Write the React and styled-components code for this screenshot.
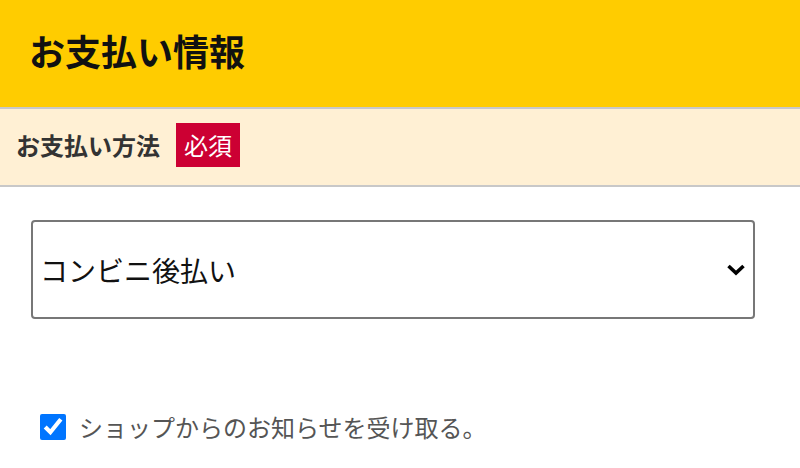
import React from 'react';
import styled, { createGlobalStyle } from 'styled-components';

const GlobalStyle = createGlobalStyle`
    html, body{
        margin: 0;
        padding: 0;
        background: #FFFFFF;
        font-family: "Noto Sans CJK JP", "Noto Sans", sans-serif;
    }
`

const Page = styled.div`
    width: 800px;
`

const Header = styled.header`
    height: 109px;
    background: #FFCC00;
    border-bottom: 2px solid #C8C8C8;
    display: flex;
    align-items: center;
    padding: 0 29px 6px;
    box-sizing: border-box;

    h1{
        margin: 0;
        font-size: 36px;
        line-height: 1.2;
        font-weight: 700;
        color: #111111;
    }
`

const LabelBar = styled.div`
    height: 78px;
    background: #FFF0D4;
    border-bottom: 2px solid #C8C8C8;
    display: flex;
    align-items: center;
    gap: 16px;
    padding: 0 16px;
    box-sizing: border-box;

    h2{
        margin: 0;
        font-size: 24px;
        line-height: 1.2;
        font-weight: 700;
        color: #333333;
        margin-top: -4px;
    }
`

const Badge = styled.span`
    display: flex;
    align-items: center;
    justify-content: center;
    width: 64px;
    height: 44px;
    background: #CC0033;
    color: #FFFFFF;
    font-size: 24px;
    line-height: 1;
    margin-top: -4px;
`

const Body = styled.div`
    padding: 33px 45px 0 31px;
`

const SelectWrap = styled.div`
    position: relative;
    width: 724px;

    svg{
        position: absolute;
        right: 9px;
        top: 44px;
        pointer-events: none;
    }
`

const Select = styled.select`
    appearance: none;
    width: 100%;
    height: 99px;
    border: 2px solid #777777;
    border-radius: 4px;
    background: #FFFFFF;
    padding: 0 40px 0 7px;
    font-family: inherit;
    font-size: 28px;
    color: #111111;
    outline: none;
`

const CheckRow = styled.label`
    display: flex;
    align-items: center;
    gap: 13px;
    margin-top: 94px;
    padding-left: 9px;
    font-size: 24px;
    line-height: 1.2;
    color: #555555;

    input{
        width: 26px;
        height: 26px;
        margin: 0;
        accent-color: #0075FF;
    }
`

const App = () => {
    return (
        <Page>
            <GlobalStyle />
            <Header>
                <h1>お支払い情報</h1>
            </Header>
            <LabelBar>
                <h2>お支払い方法</h2>
                <Badge>必須</Badge>
            </LabelBar>
            <Body>
                <SelectWrap>
                    <Select defaultValue='cvs'>
                        <option value='cvs'>コンビニ後払い</option>
                        <option value='card'>クレジットカード</option>
                    </Select>
                    <svg width='20' height='12' viewBox='0 0 20 12'>
                        <path d='M2.5 2 L10 9 L17.5 2' fill='none' stroke='#000' strokeWidth='3.6' />
                    </svg>
                </SelectWrap>
                <CheckRow>
                    <input type='checkbox' defaultChecked />
                    ショップからのお知らせを受け取る。
                </CheckRow>
            </Body>
        </Page>
    )
}

export default App
